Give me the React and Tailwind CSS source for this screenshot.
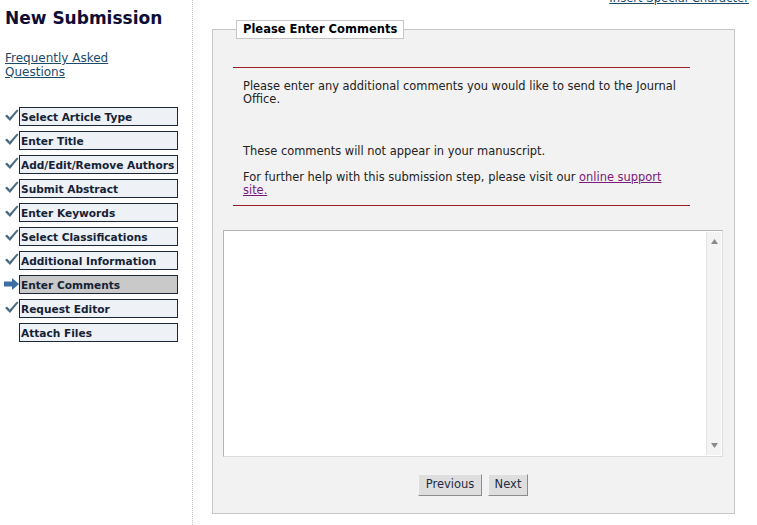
import { useState } from 'react'

const steps = [
  { label: 'Select Article Type', state: 'done' },
  { label: 'Enter Title', state: 'done' },
  { label: 'Add/Edit/Remove Authors', state: 'done' },
  { label: 'Submit Abstract', state: 'done' },
  { label: 'Enter Keywords', state: 'done' },
  { label: 'Select Classifications', state: 'done' },
  { label: 'Additional Information', state: 'done' },
  { label: 'Enter Comments', state: 'current' },
  { label: 'Request Editor', state: 'done' },
  { label: 'Attach Files', state: 'todo' },
]

function Check() {
  return (
    <svg width="15" height="13" viewBox="0 0 15 13">
      <path d="M1 7 L3 5.6 L5.8 8.6 L13 0.5 L14.5 1.6 L6 12 Z" fill="#4d6d84" />
    </svg>
  )
}

function Arrow() {
  return (
    <svg width="15" height="12" viewBox="0 0 15 12">
      <path d="M0 3.5 H8 V0 L15 6 L8 12 V8.5 H0 Z" fill="#3b6fa6" />
    </svg>
  )
}

function Sidebar() {
  return (
    <div className="w-[193px] shrink-0 min-h-[525px] border-r border-dotted border-[#c8c8c8] pl-[5px] pt-[8px]">
      <h1 className="text-[17px] leading-[20px] font-bold text-[#0d0d36]">New Submission</h1>
      <a href="#" className="block mt-[23px] text-[12px] leading-[14px] text-[#1b4a6b] underline w-[130px]">
        Frequently Asked Questions
      </a>
      <div className="mt-[28px] flex flex-col gap-[5px] -ml-[2px]">
        {steps.map(s => (
          <div key={s.label} className="flex items-center">
            <div className="w-[16px] h-[19px] flex items-start pt-[2px] pl-[1px]">
              {s.state === 'done' && <Check />}
              {s.state === 'current' && <div className="pt-[1px]"><Arrow /></div>}
            </div>
            <div
              className={
                'w-[159px] h-[19px] border border-[#1c2838] pl-[1px] pt-[3px] text-[10.6px] leading-[13px] font-bold text-[#152235] whitespace-nowrap ' +
                (s.state === 'current' ? 'bg-[#c9c9c9]' : 'bg-[#eef1f5]')
              }
            >
              {s.label}
            </div>
          </div>
        ))}
      </div>
    </div>
  )
}

function Scrollbar() {
  return (
    <div className="w-[15px] shrink-0 bg-[#f3f3f3] border-l border-[#e4e4e4] flex flex-col justify-between items-center py-[7px]">
      <svg width="7" height="5" viewBox="0 0 7 5"><path d="M0 5 L3.5 0 L7 5 Z" fill="#8a8a8a" /></svg>
      <svg width="7" height="5" viewBox="0 0 7 5"><path d="M0 0 L3.5 5 L7 0 Z" fill="#8a8a8a" /></svg>
    </div>
  )
}

export default function App() {
  const [comments, setComments] = useState('')

  return (
    <div className="flex bg-white font-['DejaVu_Sans',Verdana,sans-serif] h-[525px] overflow-hidden">
      <Sidebar />
      <div className="flex-1">
        <div className="text-right pr-[8px] -mt-[10px] leading-[13px]">
          <a href="#" className="text-[11.6px] text-[#1b4a6b] underline">Insert Special Character</a>
        </div>
        <fieldset className="ml-[19px] mt-[15px] w-[523px] h-[494px] border border-[#c6c6c6] bg-[#f2f2f2] px-0 pb-0">
          <legend className="ml-[23px] bg-white border border-[#c6c6c6] px-[6px] h-[19px] text-[11.5px] leading-[17px] font-bold text-black">
            Please Enter Comments
          </legend>
          <div className="ml-[20px] mt-[28px] w-[457px] border-t border-b border-[#9a2226] px-[10px] pt-[12px] pb-[8px] text-[11.45px] leading-[13px] text-[#222]">
            <p>Please enter any additional comments you would like to send to the Journal Office.</p>
            <p className="mt-[39px]">These comments will not appear in your manuscript.</p>
            <p className="mt-[13px]">
              For further help with this submission step, please visit our{' '}
              <a href="#" className="text-[#7a1a7a] underline">online support site.</a>
            </p>
          </div>
          <div className="ml-[10px] mt-[24px] w-[500px] h-[227px] flex bg-white border border-[#b4b4b4] border-r-[#dcdcdc] border-b-[#dcdcdc] p-[1px]">
            <textarea
              className="flex-1 resize-none outline-none text-[12px] p-[2px] bg-white"
              value={comments}
              onChange={e => setComments(e.target.value)}
            />
            <Scrollbar />
          </div>
          <div className="flex justify-center gap-[6px] mt-[17px] ml-[10px] w-[500px]">
            <button className="h-[22px] w-[64px] bg-[#dedede] border border-[#f4f4f4] border-r-[#8c8c8c] border-b-[#8c8c8c] text-[11.5px] text-[#1d2b44]">
              Previous
            </button>
            <button className="h-[22px] w-[40px] bg-[#dedede] border border-[#f4f4f4] border-r-[#8c8c8c] border-b-[#8c8c8c] text-[11.5px] text-[#1d2b44]">
              Next
            </button>
          </div>
        </fieldset>
      </div>
    </div>
  )
}
